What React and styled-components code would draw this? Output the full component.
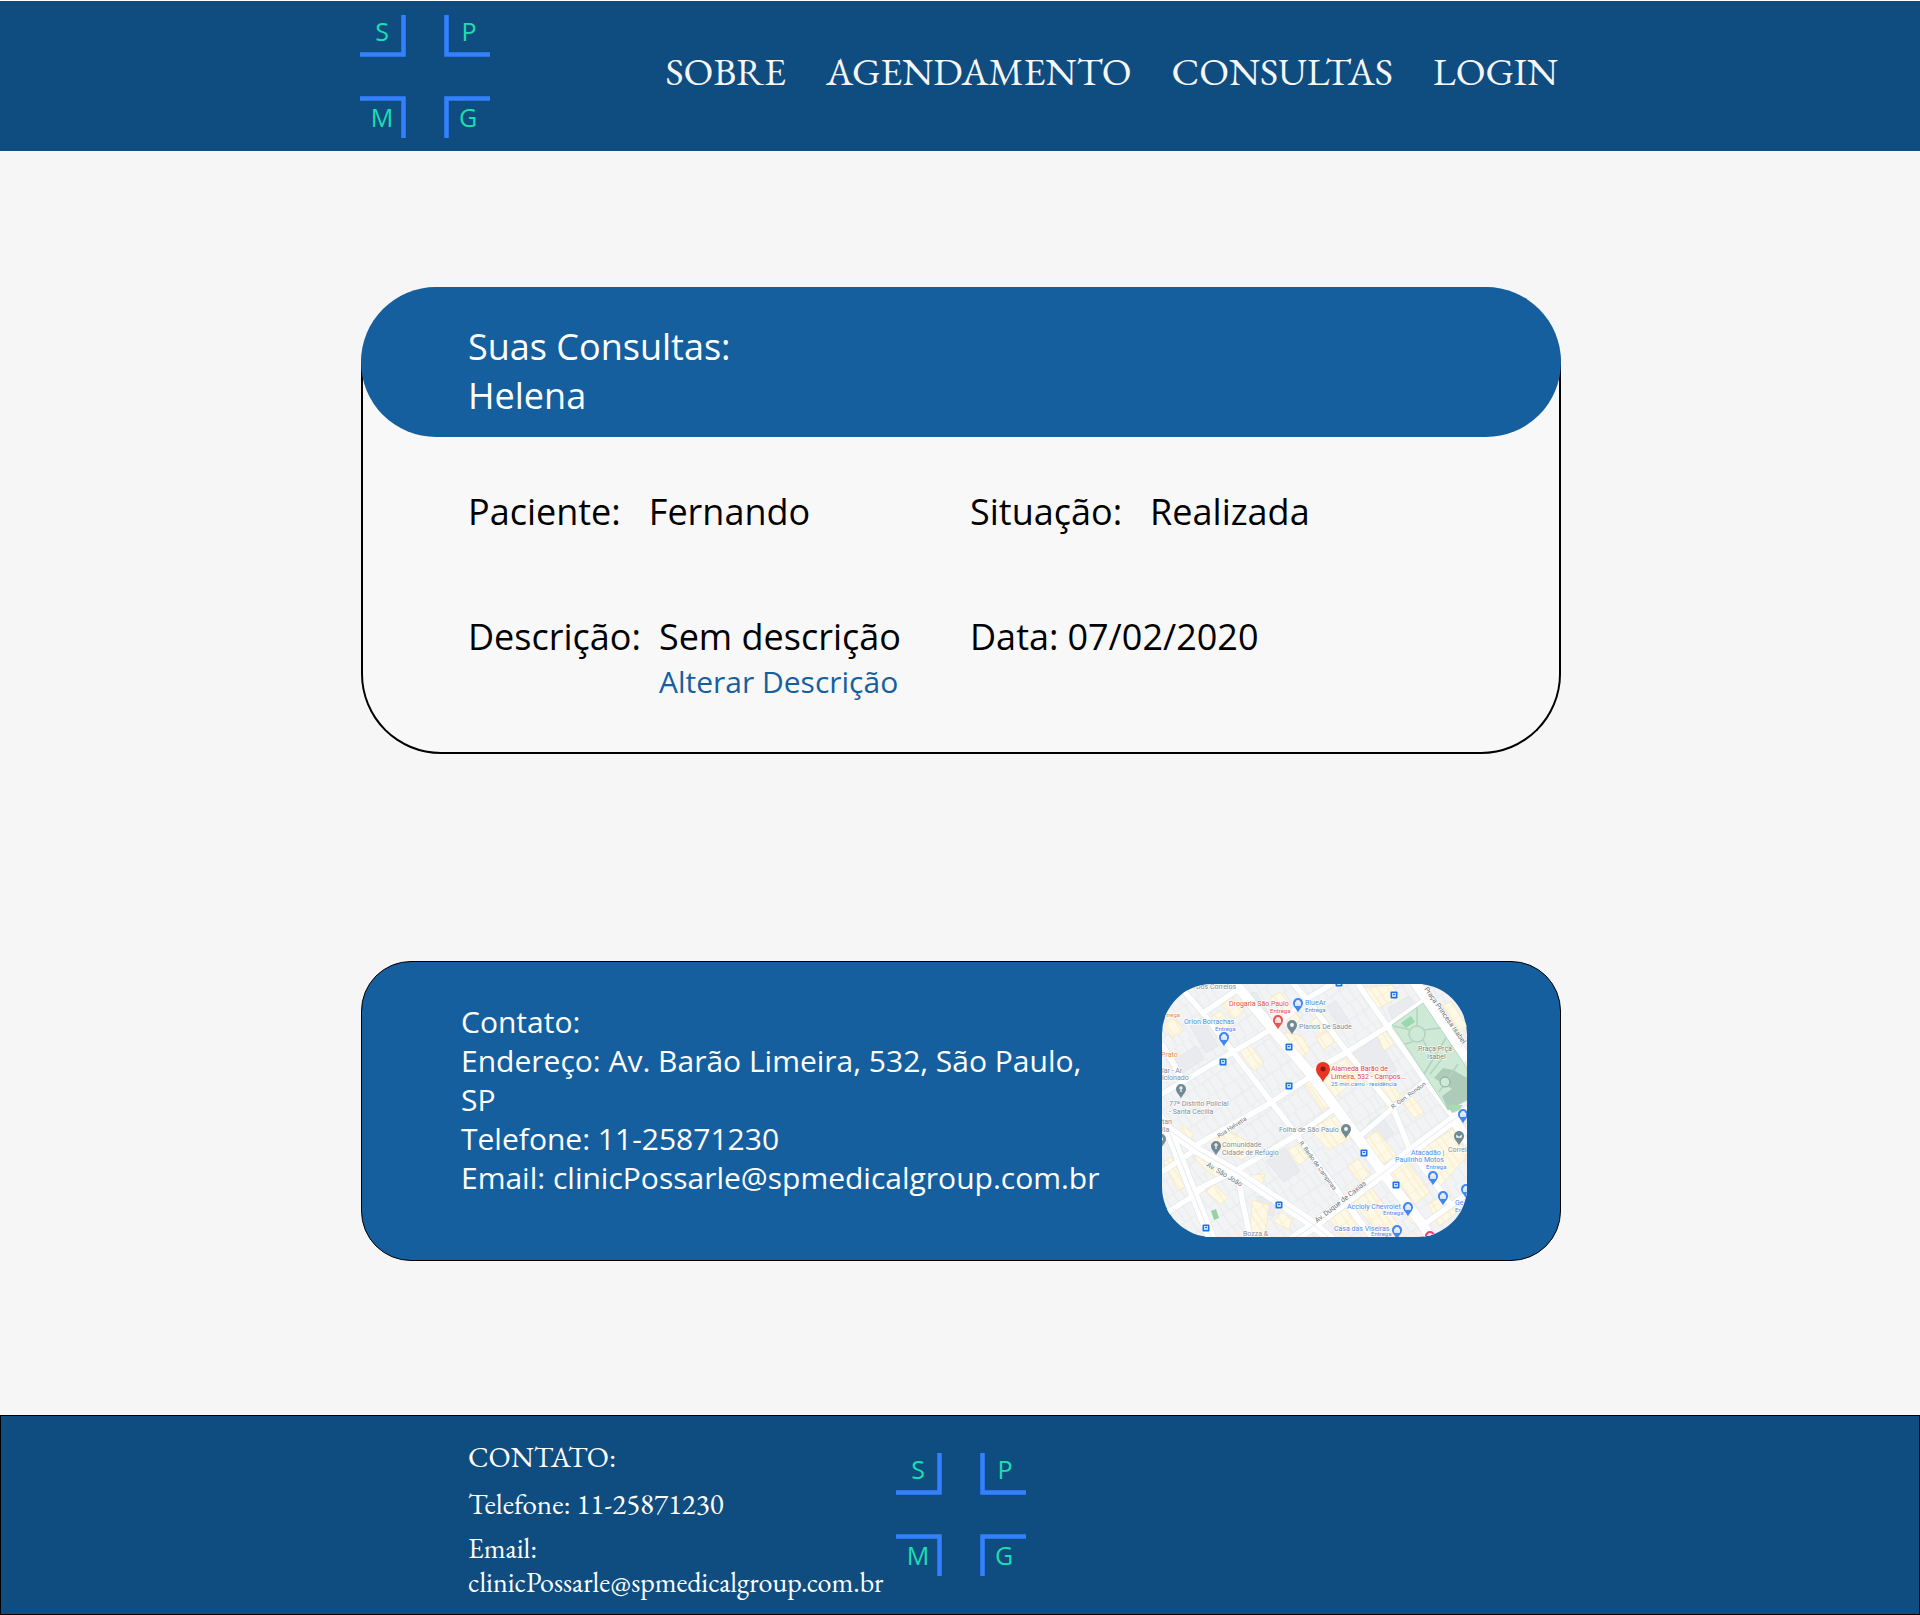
import React from "react";
import styled, { createGlobalStyle } from "styled-components";

const GlobalStyle = createGlobalStyle`
  * { box-sizing: border-box; margin: 0; padding: 0; }
  body { background: #f6f6f6; font-family: "Open Sans", "Noto Sans", sans-serif; color: #000; }
  a { color: inherit; text-decoration: none; }
`;

const serif = `"EB Garamond", "Liberation Serif", serif`;

const Page = styled.div`
  display: flex;
  flex-direction: column;
  min-height: 100vh;
  border-top: 1px solid #fff;
`;

const Container = styled.div`
  width: 100%;
  max-width: 1200px;
  margin: 0 auto;
`;

const Header = styled.header`
  background: #0f4d81;
`;

const HeaderRow = styled(Container)`
  display: flex;
  align-items: center;
  justify-content: space-between;
  min-height: 150px;
`;

const Nav = styled.nav`
  display: flex;
  gap: 40px;
  padding: 0 2px 10px 0;
  font: 39px/45px ${serif};
  color: #f6f6f6;
`;

const LogoSvg = styled.svg`
  display: block;
  flex: none;
  width: 130px;
  height: 124px;
`;

const Main = styled.main`
  flex: 1;
  display: flex;
  flex-direction: column;
  gap: 207px;
  padding: 136px 0 154px 2px;
`;

const Card = styled(Container)`
  background: #f8f8f8;
  border: 2px solid #000;
  border-top: 0;
  border-radius: 80px;
`;

const CardHead = styled.div`
  min-height: 150px;
  margin: 0 -2px;
  padding: 35px 107px 0;
  border-radius: 75px;
  background: #165f9f;
  color: #fff;
`;

const Title = styled.h1`
  font-size: 36px;
  line-height: 49px;
  font-weight: 400;
`;

const Details = styled.dl`
  display: grid;
  grid-template-columns: 502px 1fr;
  row-gap: 76px;
  padding: 50px 105px;
  font-size: 36px;
  line-height: 49px;
`;

const Field = styled.div`
  display: flex;
  gap: ${(p) => p.$gap}px;
`;

const EditButton = styled.button`
  display: block;
  border: 0;
  background: none;
  color: #165f9f;
  font: 30px/41px "Open Sans", "Noto Sans", sans-serif;
  cursor: pointer;
`;

const ContactCard = styled(Container)`
  display: flex;
  justify-content: space-between;
  align-items: flex-start;
  min-height: 300px;
  padding: 22px 93px 22px 99px;
  border: 1px solid #000;
  border-radius: 50px;
  background: #165f9f;
`;

const ContactText = styled.address`
  width: 650px;
  padding-top: 18px;
  font-style: normal;
  font-size: 30px;
  line-height: 39px;
  color: #fff;
`;

const MapFrame = styled.svg`
  display: block;
  flex: none;
  width: 305px;
  height: 253px;
  border-radius: 50px;
  font-family: Roboto, sans-serif;
`;

const Footer = styled.footer`
  border: 1px solid #000;
  background: #0f4d81;
`;

const FooterRow = styled(Container)`
  display: flex;
  align-items: center;
  min-height: 198px;
  padding: 0 0 2px 108px;
`;

const FooterText = styled.address`
  display: flex;
  flex-direction: column;
  gap: 10px;
  width: 428px;
  padding-top: 7px;
  font: 28px/34px ${serif};
  color: #fff;
`;

const FooterTitle = styled.h2`
  font-size: 29px;
  line-height: 40px;
  font-weight: 400;
`;

const FooterPhone = styled.p`
  font-size: 29px;
`;

function Logo() {
  return (
    <LogoSvg viewBox="0 0 130 124" role="img" aria-label="SP Medical Group">
      <g fill="none" stroke="#3381ff" strokeWidth="4.5">
        <path d="M43.5 1V40.5H0" />
        <path d="M86.5 1V40.5H130" />
        <path d="M0 84.5H43.5V124" />
        <path d="M130 84.5H86.5V124" />
      </g>
      <g fill="#1cdeaf" fontSize="25" fontFamily="Open Sans, Noto Sans, sans-serif" textAnchor="middle">
        <text x="22" y="27">S</text>
        <text x="109" y="27">P</text>
        <text x="22" y="113">M</text>
        <text x="108" y="113">G</text>
      </g>
    </LogoSvg>
  );
}

const minorRoads = [
  "M21 6L41 29L71 68L110 119L135 151L181 214L210 253",
  "M0 60L21 96",
  "M41 29L78 4",
  "M-2 111L71 68L108 46L148 13L170 0",
  "M31 163L105 121L148 93",
  "M75 186L135 151L175 123",
  "M148 89L185 68L225 43L263 16",
  "M130 -2L148 19L185 68L231 124L248 166L290 222",
  "M28 209L75 186",
  "M196 0L225 42L268 103L305 150",
  "M198 152L231 124L262 98",
  "M75 186L80 215L88 253",
  "M0 232L28 214L42 203",
  "M0 188L30 168",
  "M261 241L305 210",
  "M181 214L196 236L212 253",
  "M290 138L305 160",
];
const majorRoads = [
  "M68 -6L76 3L113 48L148 89L174 124L196 154L221 189L261 241L270 256",
  "M-4 138L35 166L75 189L118 218L148 238L170 256",
  "M-4 132L8 150L28 201L50 256",
  "M130 256L148 244L221 189L248 168L288 138L310 124",
  "M250 -6L262 11L305 76",
];
const cream = [
  "M44 37L58 27L70 40L56 51Z", "M60 21L70 13L82 27L72 35Z", "M77 67L87 60L102 79L92 87Z",
  "M108 14L118 8L139 35L130 44Z", "M122 48L140 52L148 66L138 74Z", "M153 90L185 74L198 93L169 116Z",
  "M196 4L230 1L238 12L214 26Z", "M154 54L168 45L176 55L162 66Z", "M214 48L222 45L232 60L222 67Z",
  "M202 93L220 83L239 113L225 122Z", "M44 157L64 146L96 163L80 176Z", "M44 208L52 200L66 214L59 220Z",
  "M89 191L103 190L99 207L89 203Z", "M90 216L107 221L103 252L88 252Z", "M147 145L177 130L190 153L167 166Z",
  "M2 178L9 173L24 202L16 207Z", "M226 187L242 175L268 208L253 220Z", "M164 232L183 218L198 238L181 251Z",
  "M188 215L207 201L236 240L219 252Z", "M253 169L291 145L305 172L276 205Z", "M266 220L285 209L297 227L277 242Z",
  "M280 22L289 17L305 42L298 49Z", "M31 173L41 171L65 188L57 198Z", "M112 238L119 228L130 235L127 246Z",
  "M140 95L150 96L170 121L160 126Z", "M201 157L215 147L234 170L222 180Z", "M16 147L22 142L32 151L26 156Z",
  "M2 40L12 34L22 46L10 54Z", "M148 38L160 30L170 42L158 50Z", "M126 166L136 160L146 174L137 181Z",
  "M237 112L246 106L262 128L252 134Z", "M238 222L246 216L258 232L250 240Z", "M186 182L196 175L208 190L198 198Z",
];
const greyBlocks = [
  "M78 12L94 8L109 34L100 40Z", "M28 42L39 34L56 62L44 69Z", "M190 71L215 53L235 86L212 100Z",
  "M165 22L174 17L189 40L180 46Z", "M226 24L247 12L253 23L231 37Z", "M96 212L113 217L112 231L93 230Z",
  "M104 177L123 164L138 187L122 198Z", "M205 140L218 130L232 149L219 159Z", "M236 194L249 187L260 201L246 212Z",
  "M10 77L34 62L42 75L17 91Z", "M277 163L290 156L299 172L288 179Z",
];

function Pin({ x, y, color = "#4285f4", r = 5, icon = "bag" }) {
  return (
    <g transform={`translate(${x} ${y})`}>
      <path
        d={`M0 ${r * 1.9}C${-r * 0.3} ${r * 1.1} ${-r} ${r * 0.8} ${-r} 0A${r} ${r} 0 1 1 ${r} 0C${r} ${r * 0.8} ${r * 0.3} ${r * 1.1} 0 ${r * 1.9}Z`}
        fill={color}
      />
      {icon === "bag" && <path d="M-2.5 -1H2.5V2.4H-2.5ZM-1.3 -1V-2.4H1.3V-1" fill="#fff" fillOpacity=".8" stroke="#fff" strokeWidth=".7" />}
      {icon === "dot" && <circle r="1.9" fill="#fff" />}
      {icon === "cross" && <path d="M0 -3V3M-2 -1H2" stroke="#fff" strokeWidth="1.2" />}
      {icon === "mail" && <path d="M-3 -2H3V2H-3ZM-3 -2L0 .5L3 -2" fill="#fff" stroke="#718a96" strokeWidth=".6" />}
      {icon === "place" && <circle r={r * 0.36} fill="#8b1a10" />}
    </g>
  );
}

function Stop({ x, y }) {
  return (
    <g transform={`translate(${x} ${y})`}>
      <rect x="-3.5" y="-3.5" width="7" height="7" rx="1" fill="#1a73e8" />
      <path d="M-1.8 -2H1.8V1.8H-1.8Z" fill="#fff" />
      <path d="M-1.1 -1.2H1.1V.2H-1.1Z" fill="#1a73e8" />
    </g>
  );
}

const blue = "#4c8df0";
const slate = "#80909b";
const labels = [
  { x: 34, y: 5, t: "Dos Correios", c: slate },
  { x: 67, y: 22, t: "Drogaria São Paulo", c: "#ea4f4a" },
  { x: 108, y: 29, t: "Entrega", c: "#ea4f4a", s: 6 },
  { x: 143, y: 21, t: "BlueAr", c: blue },
  { x: 143, y: 28, t: "Entrega", c: blue, s: 6 },
  { x: 22, y: 40, t: "Orion Borrachas", c: blue },
  { x: 53, y: 47, t: "Entrega", c: blue, s: 6 },
  { x: 1, y: 33, t: "ntrega", c: "#ea8b3c", s: 6 },
  { x: -1, y: 73, t: "Prato", c: "#ea8b3c" },
  { x: 137, y: 45, t: "Planos De Saude", c: slate },
  { x: 0, y: 89, t: "lar - Ar", c: slate },
  { x: 0, y: 96, t: "icionado", c: slate },
  { x: 7, y: 122, t: "77ª Distrito Policial", c: slate },
  { x: 7, y: 130, t: "- Santa Cecília", c: slate },
  { x: 0, y: 140, t: "tan", c: slate },
  { x: 0, y: 148, t: "lia", c: slate },
  { x: 169, y: 87, t: "Alameda Barão de", c: "#dc4742" },
  { x: 169, y: 95, t: "Limeira, 532 - Campos...", c: "#dc4742" },
  { x: 169, y: 102, t: "25 min carro - residência", c: blue, s: 6 },
  { x: 256, y: 67, t: "Praça Prça", c: "#70887e" },
  { x: 265, y: 75, t: "Isabel", c: "#70887e" },
  { x: 117, y: 148, t: "Folha de São Paulo", c: slate },
  { x: 60, y: 163, t: "Comunidade", c: slate },
  { x: 60, y: 171, t: "Cidade de Refúgio", c: slate },
  { x: 249, y: 171, t: "Atacadão |", c: blue },
  { x: 233, y: 178, t: "Paulinho Motos", c: blue },
  { x: 264, y: 185, t: "Entrega", c: blue, s: 6 },
  { x: 286, y: 168, t: "Correi", c: slate },
  { x: 185, y: 225, t: "Accioly Chevrolet", c: blue },
  { x: 221, y: 231, t: "Entrega", c: blue, s: 6 },
  { x: 172, y: 247, t: "Casa das Viseiras", c: blue },
  { x: 209, y: 252, t: "Entrega", c: blue, s: 6 },
  { x: 293, y: 221, t: "Ge", c: blue },
  { x: 293, y: 228, t: "En", c: blue, s: 6 },
  { x: 81, y: 252, t: "Bozza &", c: slate },
  { x: 57, y: 154, t: "Rua Helvetia", c: "#6b7075", s: 6, r: -33 },
  { x: 44, y: 182, t: "Av. São João", c: "#6b7075", r: 31 },
  { x: 137, y: 159, t: "R. Barão de Campinas", c: "#6b7075", s: 6, r: 54 },
  { x: 155, y: 239, t: "Av. Duque de Caxias", c: "#6b7075", r: -38 },
  { x: 231, y: 125, t: "R. Gen. Rondon", c: "#6b7075", s: 6, r: -36 },
  { x: 262, y: 5, t: "Praça Princesa Isabel", c: "#6b7075", r: 55 },
];

function CityMap() {
  return (
    <MapFrame viewBox="0 0 305 253" role="img" aria-label="Mapa da clínica">
      <defs>
        <pattern id="lots" width="46" height="30" patternUnits="userSpaceOnUse" patternTransform="rotate(-34)">
          <rect width="46" height="30" fill="#f2f3f5" />
          <path d="M0 0H46M0 15H46M7 0V15M15 0V15M21 0V15M30 0V15M38 0V15M5 15V30M14 15V30M24 15V30M31 15V30M41 15V30" stroke="#e3e5e8" strokeWidth=".7" fill="none" />
        </pattern>
        <pattern id="lotsCream" width="15" height="12" patternUnits="userSpaceOnUse" patternTransform="rotate(-34)">
          <rect width="15" height="12" fill="#fef9e6" />
          <path d="M0 0H15M5 0V12M11 0V12" stroke="#f8e8bd" strokeWidth=".8" />
        </pattern>
      </defs>
      <rect width="305" height="253" fill="url(#lots)" />
      {greyBlocks.map((d) => <path key={d} d={d} fill="#e9ebee" stroke="#dfe1e5" strokeWidth=".6" />)}
      {cream.map((d) => <path key={d} d={d} fill="url(#lotsCream)" stroke="#f5e4b4" strokeWidth=".6" />)}
      <g fill="none" strokeLinejoin="round">
        <g stroke="#dfe2e7">
          {minorRoads.map((d) => <path key={d} d={d} strokeWidth="6.5" />)}
          {majorRoads.map((d) => <path key={d} d={d} strokeWidth="11" />)}
        </g>
        <g stroke="#fff">
          {minorRoads.map((d) => <path key={d} d={d} strokeWidth="5.5" />)}
          {majorRoads.map((d) => <path key={d} d={d} strokeWidth="10" />)}
        </g>
        <g stroke="#e0e3e8" strokeWidth=".8">
          <path d={majorRoads[1]} />
          <path d={majorRoads[2]} />
          <path d={majorRoads[3]} />
        </g>
      </g>
      <path d="M230 41L261 19L305 84V116L286 126Z" fill="#ceead6" stroke="#b4d8c2" />
      <path d="M291 86L305 94V116L286 126L280 112L290 105L272 94L281 84Z" fill="#aecbb9" />
      <path d="M239 39L249 32L253 38L244 44Z" fill="#9bd8ab" />
      <g fill="none" stroke="#b2d3bf" strokeWidth="1.5">
        <path d="M232 42L249 46M255 23L255 42M262 46L279 44M261 56L272 76M250 58L243 60M255 67L290 62M268 90L290 62M284 54L262 90M277 108L296 80" />
        <circle cx="255" cy="50" r="8" />
      </g>
      <circle cx="283" cy="98" r="5" fill="#ceead6" stroke="#89a798" />
      <path d="M285 121L301 121L297 126L290 129Z" fill="#a8dab5" />
      <path d="M49 227L54 225L57 234L52 236Z" fill="#94d3a2" />

      {labels.map(({ x, y, t, c, s = 7, r = 0 }) => (
        <text
          key={`${x}-${y}`}
          transform={`translate(${x} ${y}) rotate(${r})`}
          fontSize={s}
          fill={c}
          stroke="#fff"
          strokeWidth="1.5"
          strokeOpacity=".8"
          paintOrder="stroke"
        >
          {t}
        </text>
      ))}

      <Stop x={177} y={-1} />
      <Stop x={232} y={11} />
      <Stop x={127} y={63} />
      <Stop x={61} y={78} />
      <Stop x={127} y={102} />
      <Stop x={202} y={169} />
      <Stop x={234} y={201} />
      <Stop x={117} y={221} />
      <Stop x={44} y={244} />

      <Pin x={136} y={19} />
      <Pin x={116} y={36} color="#ea5550" />
      <Pin x={130} y={41} color="#718a96" icon="dot" />
      <Pin x={62} y={53} />
      <Pin x={19} y={105} color="#718a96" icon="cross" />
      <Pin x={-1} y={155} color="#718a96" icon="dot" />
      <Pin x={54} y={162} color="#718a96" icon="cross" />
      <Pin x={184} y={145} color="#718a96" icon="dot" />
      <Pin x={297} y={152} color="#718a96" icon="mail" />
      <Pin x={301} y={130} />
      <Pin x={271} y={192} />
      <Pin x={304} y={205} />
      <Pin x={281} y={212} />
      <Pin x={246} y={223} />
      <Pin x={235} y={246} />
      <Pin x={268} y={252} color="#ec407a" />
      <Pin x={161} y={85} color="#ea3323" r={7} icon="place" />
    </MapFrame>
  );
}

export default function App() {
  return (
    <Page>
      <GlobalStyle />
      <Header>
        <HeaderRow>
          <Logo />
          <Nav>
            <a href="#sobre">SOBRE</a>
            <a href="#agendamento">AGENDAMENTO</a>
            <a href="#consultas">CONSULTAS</a>
            <a href="#login">LOGIN</a>
          </Nav>
        </HeaderRow>
      </Header>

      <Main>
        <Card as="section" id="consultas">
          <CardHead>
            <Title>
              Suas Consultas:
              <br />
              Helena
            </Title>
          </CardHead>
          <Details>
            <Field $gap={28}>
              <dt>Paciente:</dt>
              <dd>Fernando</dd>
            </Field>
            <Field $gap={28}>
              <dt>Situação:</dt>
              <dd>Realizada</dd>
            </Field>
            <Field $gap={18}>
              <dt>Descrição:</dt>
              <dd>
                Sem descrição
                <EditButton type="button">Alterar Descrição</EditButton>
              </dd>
            </Field>
            <Field $gap={9}>
              <dt>Data:</dt>
              <dd>07/02/2020</dd>
            </Field>
          </Details>
        </Card>

        <ContactCard as="section" id="sobre">
          <ContactText>
            <p>Contato:</p>
            <p>Endereço: Av. Barão Limeira, 532, São Paulo, SP</p>
            <p>Telefone: 11-25871230</p>
            <p>Email: clinicPossarle@spmedicalgroup.com.br</p>
          </ContactText>
          <CityMap />
        </ContactCard>
      </Main>

      <Footer>
        <FooterRow>
          <FooterText>
            <FooterTitle>CONTATO:</FooterTitle>
            <FooterPhone>Telefone: 11-25871230</FooterPhone>
            <p>
              Email:
              <br />
              clinicPossarle@spmedicalgroup.com.br
            </p>
          </FooterText>
          <Logo />
        </FooterRow>
      </Footer>
    </Page>
  );
}
